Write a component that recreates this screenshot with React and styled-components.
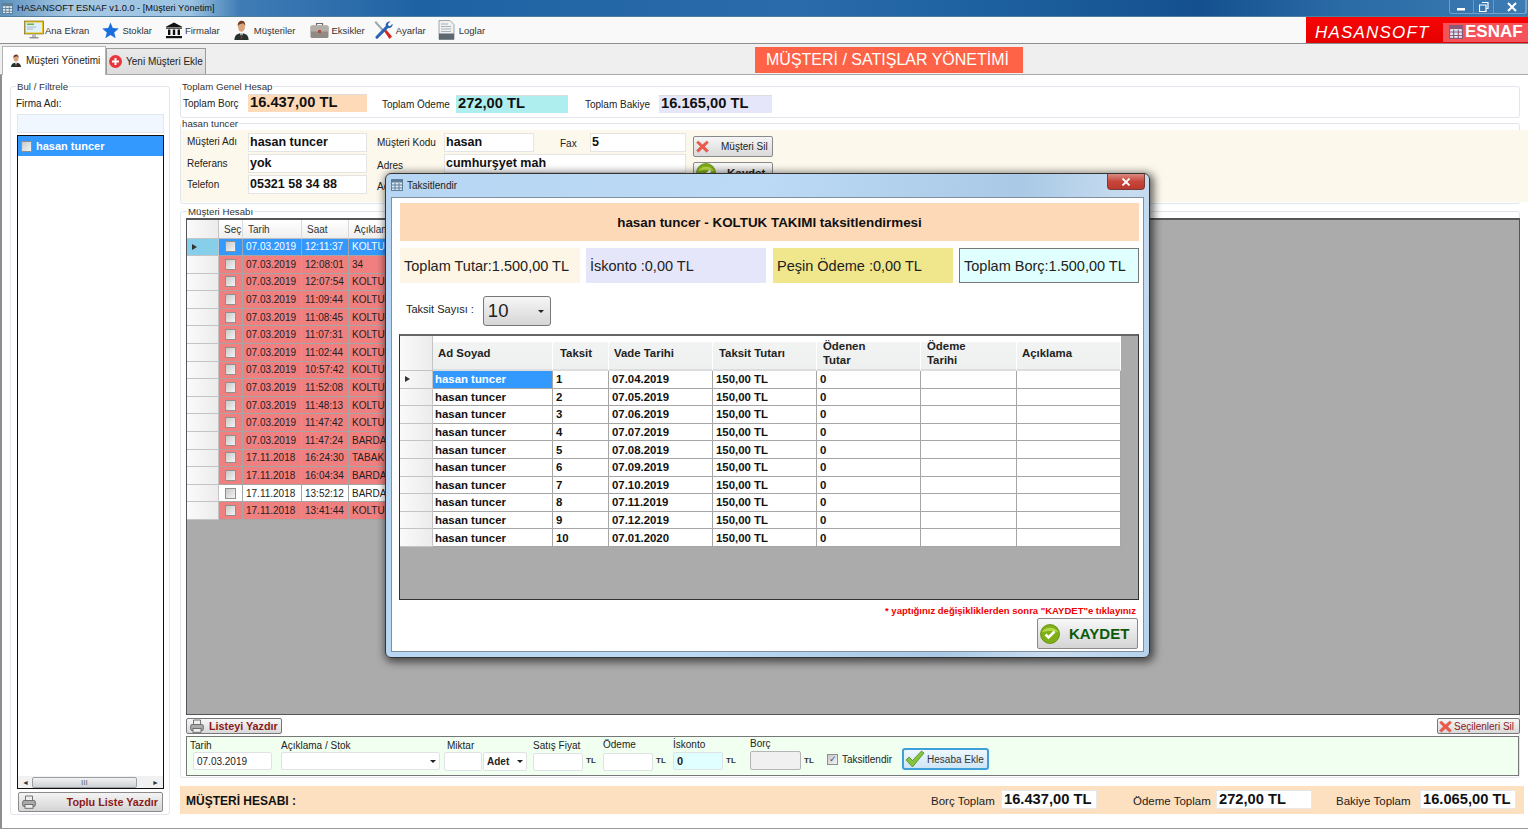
import React from "react";
import styled, { createGlobalStyle } from "styled-components";

const GlobalStyle = createGlobalStyle`
  html, body {
    margin: 0;
    padding: 0;
    overflow: hidden;
    background: #fff;
  }
  * {
    box-sizing: border-box;
  }
  body {
    font-family: "Liberation Sans", Arial, sans-serif;
    font-size: 10px;
    color: #222;
  }
`;

const accountRows = [
  ["07.03.2019", "12:11:37", "KOLTUK", "selected"],
  ["07.03.2019", "12:08:01", "34", "red"],
  ["07.03.2019", "12:07:54", "KOLTUK", "red"],
  ["07.03.2019", "11:09:44", "KOLTUK", "red"],
  ["07.03.2019", "11:08:45", "KOLTUK", "red"],
  ["07.03.2019", "11:07:31", "KOLTUK", "red"],
  ["07.03.2019", "11:02:44", "KOLTUK", "red"],
  ["07.03.2019", "10:57:42", "KOLTUK", "red"],
  ["07.03.2019", "11:52:08", "KOLTUK", "red"],
  ["07.03.2019", "11:48:13", "KOLTUK", "red"],
  ["07.03.2019", "11:47:42", "KOLTUK", "red"],
  ["07.03.2019", "11:47:24", "BARDAK", "red"],
  ["17.11.2018", "16:24:30", "TABAK", "red"],
  ["17.11.2018", "16:04:34", "BARDAK", "red"],
  ["17.11.2018", "13:52:12", "BARDAK", "white"],
  ["17.11.2018", "13:41:44", "KOLTUK", "red"],
];

const installments = [
  ["1", "07.04.2019"],
  ["2", "07.05.2019"],
  ["3", "07.06.2019"],
  ["4", "07.07.2019"],
  ["5", "07.08.2019"],
  ["6", "07.09.2019"],
  ["7", "07.10.2019"],
  ["8", "07.11.2019"],
  ["9", "07.12.2019"],
  ["10", "07.01.2020"],
];

const CalcIcon = ({ size = 12, color = "#5d7f99" }) => (
  <svg width={size} height={size} viewBox="0 0 12 12">
    <rect x="0.5" y="0.5" width="11" height="11" fill="#dfe9f1" stroke={color} />
    <rect x="0.5" y="0.5" width="11" height="3" fill={color} />
    <path d="M4 4v7.5M8 4v7.5M1 6h10M1 9h10" stroke={color} strokeWidth="1" />
  </svg>
);

const MonitorIcon = () => (
  <svg width="20" height="20" viewBox="0 0 20 20">
    <rect x="0.5" y="1" width="19" height="13" fill="#e7c21b" stroke="#6b5a10" strokeWidth="0.6" />
    <rect x="2" y="2.5" width="16" height="10" fill="#dff0f6" />
    <rect x="3" y="3.5" width="7" height="1.5" fill="#67b04a" />
    <path d="M3 7h9M3 9h6" stroke="#9ab" strokeWidth="0.8" />
    <rect x="8" y="14" width="4" height="3" fill="#b9b9b9" />
    <rect x="5.5" y="17" width="9" height="1.4" fill="#8e8e8e" />
  </svg>
);

const StarIcon = () => (
  <svg width="17" height="17" viewBox="0 0 17 17">
    <path d="M8.5 0.5l2.3 5.6 6 .4-4.6 3.9 1.5 5.9-5.2-3.2-5.2 3.2 1.5-5.9L.2 6.5l6-.4z" fill="#1a6fe0" />
  </svg>
);

const BankIcon = () => (
  <svg width="18" height="17" viewBox="0 0 18 17">
    <path d="M9 0.5L17.5 5H.5z" fill="#111" />
    <rect x="1" y="5.5" width="16" height="1.2" fill="#111" />
    <path d="M3 7.5h2.4v5.6H3zM7.8 7.5h2.4v5.6H7.8zM12.6 7.5H15v5.6h-2.4z" fill="#111" />
    <rect x="1" y="14" width="16" height="2.2" fill="#111" />
  </svg>
);

const PersonIcon = ({ w = 17, h = 20 }) => (
  <svg width={w} height={h} viewBox="0 0 18 18" preserveAspectRatio="none">
    <path d="M1.5 18c0-4.2 3-6 7.5-6s7.5 1.800 7.500 6z" fill="#26322d" />
    <path d="M7.300 12l1.700 3.500 1.700-3.500z" fill="#e8e8e8" />
    <path d="M8.500 13h1l.4 3.500-.9 1-.9-1z" fill="#8b2d22" />
    <ellipse cx="9" cy="6" rx="3.700" ry="4.600" fill="#d9a57f" />
    <path d="M5 5.500C4.800 1.900 7 .6 9.200.6c2.400 0 4 1.600 3.800 4.900-.8-1.500-1.500-2.200-2.600-2.500-1.500.6-3.800.6-5.400 2.500z" fill="#6e3c20" />
  </svg>
);

const CaseIcon = () => (
  <svg width="19" height="17" viewBox="0 0 19 17">
    <path d="M6.500 3.500V1.500h6v2" fill="none" stroke="#6f6a64" strokeWidth="1.200" />
    <rect x="0.500" y="3.500" width="18" height="12.500" rx="1.500" fill="#8f8a84" />
    <rect x="0.500" y="3.500" width="18" height="6" rx="1.500" fill="#b3aea8" />
    <rect x="8" y="8" width="3" height="3" fill="#a4523e" />
  </svg>
);

const ToolsIcon = () => (
  <svg width="20" height="20" viewBox="0 0 20 20">
    <path d="M3 1l9 10-1.500 1.500L1.500 2.500z" fill="#9ca7b1" />
    <path d="M11 11l2-1.500 6 7-2.500 2.500z" fill="#d6261c" />
    <path d="M17.500 1.500l-2.600 2.600.6 1.600 1.600.5 2.400-2.400c.5 2.600-1.800 5-4.400 4.200L4.800 18.500c-1 1-3.200-1-2.200-2.100L12.800 6.100c-.9-2.700 1.900-5.200 4.700-4.600z" fill="#2a62b8" />
  </svg>
);

const LogIcon = () => (
  <svg width="17" height="20" viewBox="0 0 17 20">
    <path d="M1 .5h11l4 4v15H1z" fill="#eef0f2" stroke="#8d949b" strokeWidth="0.8" />
    <path d="M3 4h7M3 6.500h10M3 9h10M3 11.500h10" stroke="#aab2ba" strokeWidth="1" />
    <rect x="1" y="13.500" width="15" height="6" fill="#5d6770" />
  </svg>
);

const PlusIcon = () => (
  <svg width="13" height="13" viewBox="0 0 13 13">
    <circle cx="6.500" cy="6.500" r="6.500" fill="#e8373c" />
    <path d="M6.500 3v7M3 6.500h7" stroke="#fff" strokeWidth="2" />
  </svg>
);

const CrossIcon = ({ size = 13 }) => (
  <svg width={size} height={size} viewBox="0 0 13 13">
    <path d="M2.200 1L6.500 4.700 10.800 1l1.700 1.700L8.600 6.500l3.900 4L10.600 12.300 6.500 8.500 2.400 12.300.5 10.500l3.900-4L.5 2.700z" fill="#ee5a4c" stroke="#c9463a" strokeWidth="0.4" />
  </svg>
);

const OkIcon = ({ size = 20 }) => (
  <svg width={size} height={size} viewBox="0 0 20 20">
    <circle cx="10" cy="10" r="9.500" fill="#7fae16" stroke="#5d8a0c" strokeWidth="0.800" />
    <path d="M2 8.500A8.500 7 0 0 1 18 8.500c-4-2-12-2-16 0z" fill="#b5d84a" />
    <path d="M5.500 10.500l3 3 6-6" fill="none" stroke="#fff" strokeWidth="2.600" />
  </svg>
);

const BigCheckIcon = () => (
  <svg width="20" height="18" viewBox="0 0 20 18">
    <path d="M1 10l3-3 3.500 3.500L16.500 1 19 3 7.500 17z" fill="#86c440" stroke="#4f8a1d" strokeWidth="0.800" />
  </svg>
);

const PrinterIcon = () => (
  <svg width="14" height="14" viewBox="0 0 14 14">
    <path d="M3.500 6V1h7v5" fill="#eee" stroke="#666" strokeWidth="0.900" />
    <rect x="0.700" y="5.500" width="12.600" height="6" rx="1.500" fill="#aaa" stroke="#666" strokeWidth="0.900" />
    <rect x="3" y="9.500" width="8" height="3.800" fill="#eee" stroke="#666" strokeWidth="0.900" />
  </svg>
);

const Page = styled.div`
  position: relative;
  width: 1528px;
  height: 829px;
  overflow: hidden;
  background: #fff;
`;

const TitleBar = styled.div`
  height: 17px;
  display: flex;
  align-items: center;
  gap: 4px;
  padding-left: 2px;
  background: linear-gradient(
    90deg,
    #5d90bd 0,
    #a5c8e4 70px,
    #9cc3e2 190px,
    #3f7cb6 240px,
    #1f62a3 420px,
    #2a6cab 800px,
    #1d609f 1000px,
    #14508f 1200px,
    #2a6aa5 1340px,
    #3d7cb3 1528px
  );
  border-bottom: 1px solid #4f7f9f;
`;

const TitleText = styled.span`
  flex: 1;
  font-size: 9.25px;
  color: #111;
`;

const WindowButtons = styled.div`
  display: flex;
  align-self: flex-start;
  height: 14px;
  margin-right: 1px;
  border: 1px solid rgba(255, 255, 255, 0.3);
  border-top: 0;
  border-radius: 0 0 3px 3px;
`;

const WindowButton = styled.div`
  width: ${(p) => p.$w}px;
  padding-left: ${(p) => p.$pl || 0}px;
  display: flex;
  align-items: center;
  justify-content: center;
  border-right: 1px solid rgba(255, 255, 255, 0.25);
`;

const MenuBar = styled.div`
  height: 27px;
  display: flex;
  align-items: center;
  padding-left: 24px;
  background: #f9f9f9;
  border-bottom: 1px solid #8e8e8e;
`;

const MenuItem = styled.div`
  display: flex;
  align-items: center;
  gap: ${(p) => p.$gap ?? 3}px;
  margin-right: ${(p) => p.$mr}px;
  font-size: 9.5px;
  color: #333;
`;

const Logo = styled.div`
  margin-left: auto;
  width: 222px;
  height: 26px;
  display: flex;
  align-items: center;
  background: linear-gradient(#f90505, #e40000);
  color: #fff;
`;

const LogoName = styled.span`
  width: 112px;
  margin: 5px 0 0 9px;
  font-size: 17px;
  font-style: italic;
  letter-spacing: 1.2px;
`;

const LogoBadge = styled.div`
  margin: 4px 0 0 16px;
  height: 19px;
  flex: 1;
  display: flex;
  align-items: center;
  gap: 2px;
  padding-left: 6px;
  background: #f4535a;
  font-size: 17px;
  font-weight: 700;
`;

const TabStrip = styled.div`
  height: 31px;
  display: flex;
  align-items: flex-end;
  padding-left: 2px;
  background: #efefef;
  border-bottom: 1px solid #a9a9a9;
`;

const ActiveTab = styled.div`
  width: 104px;
  height: 29px;
  margin-bottom: -1px;
  display: flex;
  align-items: center;
  gap: 4px;
  padding: 0 0 2px 7px;
  background: #fff;
  border: 1px solid #b5b5b5;
  border-bottom: 0;
  font-size: 10px;
`;

const Tab = styled.div`
  width: 100px;
  height: 26px;
  display: flex;
  align-items: center;
  gap: 4px;
  padding-left: 2px;
  background: linear-gradient(#eaeaea, #dcdcdc);
  border: 1px solid #9a9a9a;
  border-bottom: 0;
  font-size: 10px;
`;

const Banner = styled.div`
  align-self: flex-start;
  margin: 3px 0 0 549px;
  width: 268px;
  height: 26px;
  display: flex;
  align-items: center;
  justify-content: center;
  padding-right: 3px;
  background: #ff6347;
  color: #fff;
  font-size: 16px;
`;

const Body = styled.div`
  display: flex;
  padding: 11px 0 0 10px;
  height: 754px;
  border-left: 2px solid #8e8e8e;
  border-bottom: 1px solid #9a9a9a;
`;

const Sidebar = styled.div`
  width: 160px;
  height: 729px;
  margin-left: -2px;
  display: flex;
  flex-direction: column;
  padding: 0 5px;
  border: 1px solid #e1e6ec;
  border-radius: 3px;
`;

const Legend = styled.div`
  width: fit-content;
  height: 12px;
  line-height: 12px;
  margin: -6px 0 0 ${(p) => p.$ml || 0}px;
  padding: 0 1px;
  background: #fff;
  font-size: 9.7px;
  color: #333;
`;

const FilterLabel = styled.div`
  height: 12px;
  margin-top: 5px;
  font-size: 10px;
  line-height: 12px;
`;

const FilterInput = styled.div`
  height: 19px;
  margin: 4px 0 2px 1px;
  background: #f0f7ff;
  border: 1px solid #e3e6ea;
`;

const FirmList = styled.div`
  flex: none;
  height: 654px;
  margin-left: 1px;
  display: flex;
  flex-direction: column;
  border: 1px solid #111;
`;

const FirmRow = styled.div`
  height: 20px;
  display: flex;
  align-items: center;
  gap: 4px;
  padding-left: 3px;
  background: #3399ff;
  color: #fff;
  font-size: 11px;
  font-weight: 700;
`;

const CheckBox = styled.span`
  width: 11px;
  height: 11px;
  flex: none;
  display: inline-flex;
  align-items: center;
  justify-content: center;
  background: linear-gradient(135deg, #c8c8c8, #f4f4f4);
  border: 1px solid #8f8f8f;
  color: #33529a;
  font-size: 9px;
  line-height: 1;
`;

const HScroll = styled.div`
  margin-top: auto;
  height: 12px;
  display: flex;
  align-items: center;
  gap: 3px;
  padding: 0 4px;
  background: #f1f1f1;
  color: #333;
  font-size: 7px;
`;

const HEnd = styled.span`
  margin-left: auto;
`;

const HThumb = styled.div`
  width: 105px;
  height: 11px;
  display: flex;
  align-items: center;
  justify-content: center;
  background: linear-gradient(#f2f2f2, #cfd3d6);
  border: 1px solid #9aa0a4;
  border-radius: 2px;
  color: #666;
  font-size: 8px;
`;

const PrintAllButton = styled.button`
  height: 20px;
  margin: 3px 0 0 2px;
  width: 145px;
  padding: 0 4px 0 3px;
  display: flex;
  align-items: center;
  justify-content: space-between;
  background: linear-gradient(#f4f4f4, #d4d4d4);
  border: 1px solid #8a8a8a;
  border-radius: 2px;
  color: #8b1a1a;
  font: 700 10.8px "Liberation Sans", Arial, sans-serif;
`;

const Main = styled.div`
  width: 1340px;
  margin-left: 10px;
  display: flex;
  flex-direction: column;
`;

const Group = styled.div`
  height: ${(p) => p.$h}px;
  margin-bottom: ${(p) => p.$mb || 0}px;
  border: 1px solid #e1e6ec;
  border-radius: 3px;
`;

const SummaryRow = styled.div`
  display: flex;
  align-items: flex-start;
  padding-left: 2px;
`;

const SummaryLabel = styled.span`
  width: ${(p) => p.$w}px;
  margin: ${(p) => p.$top}px 0 0 ${(p) => p.$ml || 0}px;
  font-size: 10px;
`;

const SummaryValue = styled.div`
  width: ${(p) => p.$w}px;
  height: 18px;
  margin-top: ${(p) => p.$top}px;
  padding-left: 2px;
  background: ${(p) => p.$bg};
  border-top: 1px solid #ddd;
  font-size: 14.7px;
  font-weight: 700;
  line-height: 15px;
  color: #111;
`;

const CustomerForm = styled.div`
  height: 72px;
  margin-right: -9px;
  display: grid;
  grid-template-columns: 67px 119px 77px 90px 56px 96px 7px 80px;
  grid-template-rows: 21px 21px 21px;
  padding-top: 3px;
  background: #fdf8ec;
`;

const FormLabel = styled.label`
  padding: ${(p) => p.$pt ?? 4}px 0 0 ${(p) => p.$pl || 0}px;
  font-size: 10px;
  grid-column: ${(p) => p.$col || "auto"};
  grid-row: ${(p) => p.$row || "auto"};
`;

const FormInput = styled.div`
  height: 19px;
  padding-left: 1px;
  background: #fff;
  border: 1px solid #e4e4e4;
  font-size: 12.5px;
  font-weight: 700;
  line-height: 16px;
  color: #111;
  grid-column: ${(p) => p.$col || "auto"};
  grid-row: ${(p) => p.$row || "auto"};
`;

const FormButton = styled.button`
  width: 80px;
  height: ${(p) => p.$h || 21}px;
  margin-top: ${(p) => p.$mt}px;
  padding: 0 0 0 2px;
  display: flex;
  align-items: center;
  gap: ${(p) => p.$gap}px;
  white-space: nowrap;
  background: linear-gradient(#f6f6f6, #d9d9d9);
  border: 1px solid #8a8a8a;
  border-radius: 2px;
  font: ${(p) => (p.$bold ? "700 11.5px" : "400 10px")} "Liberation Sans", Arial, sans-serif;
  color: #222;
  grid-column: 8;
  grid-row: ${(p) => p.$row};
`;

const DataPanel = styled.div`
  height: 497px;
  margin: 0 0 0 5px;
  width: 1334px;
  background: #ababab;
  border: 1px solid #555;
  border-top-width: 2px;
`;

const GridRow = styled.div`
  width: ${(p) => p.$w}px;
  display: grid;
  grid-template-columns: ${(p) => p.$cols};
  height: ${(p) => p.$h}px;
`;

const RowHead = styled.div`
  display: flex;
  align-items: center;
  padding-left: 5px;
  background: ${(p) => (p.$active ? "#87ceeb" : "linear-gradient(90deg,#fafafa,#ececec)")};
  border-right: 1px solid #c4c4c4;
  border-bottom: 1px solid #c4c4c4;
`;

const Arrow = styled.span`
  width: 0;
  height: 0;
  border-top: 3.5px solid transparent;
  border-bottom: 3.5px solid transparent;
  border-left: 5px solid #333;
`;

const HeadCell = styled.div`
  padding: 1px 0 0 5px;
  display: flex;
  align-items: center;
  background: linear-gradient(#ffffff, #efefef);
  border-right: 1px solid #dadada;
  border-bottom: 1px solid #bbb;
  font-size: 10px;
  color: #333;
`;

const tones = { selected: "#3399ff", red: "#f08080", white: "#fff" };

const Cell = styled.div`
  padding-left: 3px;
  display: flex;
  align-items: center;
  background: ${(p) => tones[p.$tone]};
  color: ${(p) => (p.$tone === "selected" ? "#fff" : "#222")};
  border-right: 1px solid #a6a6a6;
  border-bottom: 1px solid #a6a6a6;
  font-size: 10px;
  white-space: nowrap;
  overflow: hidden;
`;

const CheckCell = styled(Cell)`
  justify-content: center;
  padding-left: 0;
`;

const ActionRow = styled.div`
  height: 16px;
  margin: 3px 0 2px 5px;
  width: 1334px;
  display: flex;
  justify-content: space-between;
`;

const SmallButton = styled.button`
  width: ${(p) => p.$w}px;
  height: 16px;
  padding: 0 0 0 ${(p) => p.$pl}px;
  display: flex;
  align-items: center;
  gap: ${(p) => p.$gap}px;
  white-space: nowrap;
  background: linear-gradient(#f6f6f6, #d9d9d9);
  border: 1px solid #777;
  border-radius: 2px;
  color: #8b1a1a;
  font: ${(p) => (p.$bold ? "700 10.800px" : "400 10px")} "Liberation Sans", Arial, sans-serif;
`;

const EntryPanel = styled.div`
  height: 40px;
  width: 1333px;
  margin-left: 5px;
  display: flex;
  align-items: flex-start;
  padding-left: 3px;
  background: #f0fff0;
  border: 1px solid #777;
`;

const Field = styled.div`
  width: ${(p) => p.$w}px;
  margin-left: ${(p) => p.$ml || 0}px;
  display: flex;
  flex-direction: column;
  font-size: 10px;
`;

const FieldLabel = styled.span`
  height: 12px;
  line-height: 12px;
  margin: ${(p) => p.$mt}px 0 0 ${(p) => p.$ml || 0}px;
  white-space: nowrap;
`;

const FieldInput = styled.div`
  width: 100%;
  height: ${(p) => p.$h || 18}px;
  margin-top: ${(p) => p.$mt ?? 2}px;
  display: flex;
  align-items: center;
  justify-content: space-between;
  padding: 0 3px;
  background: ${(p) => p.$bg || "#fff"};
  border: 1px solid ${(p) => p.$line || "#dfe3e6"};
  border-radius: 2px;
  font-size: ${(p) => p.$fs || 10}px;
  font-weight: ${(p) => (p.$bold ? 700 : 400)};
  color: #222;
`;

const Caret = styled.span`
  width: 0;
  height: 0;
  border-left: 3px solid transparent;
  border-right: 3px solid transparent;
  border-top: 3px solid #222;
`;

const Unit = styled.span`
  width: ${(p) => p.$w}px;
  margin-top: 19px;
  padding-left: 3px;
  font-size: 8px;
  font-weight: 700;
  color: #333;
`;

const TaxCheck = styled.div`
  margin: 17px 0 0 ${(p) => p.$ml}px;
  display: flex;
  align-items: center;
  gap: 4px;
  font-size: 10px;
`;

const AddButton = styled.button`
  width: 87px;
  height: 22px;
  margin: 11px 0 0 10px;
  padding: 0 0 0 1px;
  display: flex;
  align-items: center;
  gap: 2px;
  white-space: nowrap;
  background: linear-gradient(#eef7fd, #cfe6f6);
  border: 2px solid #3f9fd8;
  border-radius: 3px;
  color: #333;
  font: 10px "Liberation Sans", Arial, sans-serif;
`;

const Footer = styled.div`
  height: 28px;
  margin: 8px -4px 0 0;
  display: flex;
  align-items: center;
  padding-left: 6px;
  background: #fde0bf;
`;

const FooterTitle = styled.strong`
  flex: 1;
  padding-top: 1px;
  font-size: 12px;
  color: #111;
`;

const FooterLabel = styled.span`
  width: ${(p) => p.$w}px;
  padding: 2px 0 0 ${(p) => p.$pl || 0}px;
  font-size: 11.5px;
  color: #222;
`;

const FooterValue = styled.div`
  width: 96px;
  height: 19px;
  margin: 0 ${(p) => p.$mr}px 1px 0;
  padding-left: 2px;
  background: #fff;
  border: 1px solid #e8e8e8;
  font-size: 14.7px;
  font-weight: 700;
  line-height: 17px;
  color: #111;
`;

const Modal = styled.div`
  position: absolute;
  left: 385px;
  top: 173px;
  width: 765px;
  height: 485px;
  display: flex;
  flex-direction: column;
  padding: 0 5px 5px;
  background: linear-gradient(100deg, #b7d6f3 0, #bcdaf5 45%, #a9c9e6 75%, #c8dcf0 88%, #b5d2ec 100%);
  border: 1px solid #333;
  border-radius: 6px;
  box-shadow: 2px 2px 8px 2px rgba(0, 0, 0, 0.6);
`;

const ModalTitle = styled.div`
  height: 23px;
  flex: none;
  display: flex;
  align-items: flex-start;
  justify-content: space-between;
  font-size: 10px;
  color: #222;
`;

const ModalCaption = styled.div`
  display: flex;
  align-items: center;
  gap: 4px;
  padding: 5px 0 0 0;
`;

const CloseButton = styled.div`
  width: 38px;
  height: 16px;
  margin-right: -1px;
  display: flex;
  align-items: center;
  justify-content: center;
  background: linear-gradient(#d98a80 0, #c8453a 50%, #b93a30 100%);
  border: 1px solid #7a3a35;
  border-top: 0;
  border-radius: 0 0 4px 4px;
`;

const ModalBody = styled.div`
  flex: 1;
  display: flex;
  flex-direction: column;
  padding: 5px 4px 0 8px;
  background: #fff;
  border: 1px solid #7f8f9f;
`;

const ModalHeader = styled.div`
  height: 38px;
  flex: none;
  display: flex;
  align-items: center;
  justify-content: center;
  background: #fed9b7;
  font-size: 13.4px;
  font-weight: 700;
  color: #111;
`;

const TotalRow = styled.div`
  display: flex;
  gap: 6px;
  margin-top: 7px;
`;

const TotalBox = styled.div`
  flex: none;
  width: 180px;
  height: 35px;
  margin-left: ${(p) => p.$ml || 0}px;
  display: flex;
  align-items: center;
  padding-left: 4px;
  background: ${(p) => p.$bg};
  border: ${(p) => (p.$line ? "1px solid #777" : "0")};
  font-size: 14.500px;
  color: #222;
`;

const InstallmentRow = styled.div`
  display: flex;
  align-items: center;
  gap: 9px;
  margin: 13px 0 8px 6px;
`;

const InstallmentLabel = styled.span`
  padding-bottom: 4px;
  font-size: 11px;
`;

const Combo = styled.div`
  width: 68px;
  height: 30px;
  display: flex;
  align-items: center;
  justify-content: space-between;
  padding: 0 6px 0 4px;
  background: linear-gradient(#f6f6f6, #d6d6d6);
  border: 1px solid #777;
  border-radius: 3px;
  font-size: 18.500px;
  color: #222;
`;

const PlanPanel = styled.div`
  width: 740px;
  height: 266px;
  margin-left: -1px;
  flex: none;
  background: #ababab;
  border: 1px solid #333;
  border-top: 2px solid #666;
`;

const PlanHead = styled(HeadCell)`
  padding: 0 0 0 ${(p) => p.$pl ?? 6}px;
  align-items: center;
  background: linear-gradient(#fff 0, #fff 18%, #f2f3f3 20%, #eef0f0 100%);
  border-right: 1px solid #fff;
  border-bottom: 2px solid #ddd;
  font-size: 11.400px;
  font-weight: 700;
  line-height: 14px;
  color: #222;
`;

const PlanCell = styled(Cell)`
  padding-left: ${(p) => p.$pl ?? 3}px;
  font-size: 11.400px;
  font-weight: 700;
  color: ${(p) => (p.$tone === "selected" ? "#fff" : "#111")};
`;

const Notice = styled.div`
  margin-top: 5px;
  height: 12px;
  padding-right: 3px;
  text-align: right;
  font-size: 9.500px;
  font-weight: 700;
  line-height: 12px;
  color: #f00000;
`;

const SaveRow = styled.div`
  display: flex;
  justify-content: flex-end;
  margin-top: 1px;
  padding-right: 1px;
`;

const SaveButton = styled.button`
  width: 101px;
  height: 31px;
  padding: 0 0 0 2px;
  display: flex;
  align-items: center;
  gap: 9px;
  background: linear-gradient(#f8f8f8, #d4d4d4);
  border: 1px solid #8a8a8a;
  border-radius: 2px;
  color: #0b5a0b;
  font: 700 15px "Liberation Sans", Arial, sans-serif;
`;

const accountCols = "32px 24px 59px 47px 100px";
const planCols = "33px 120px 56px 104px 104px 104px 96px 104px";

export default function App() {
  return (
    <Page>
      <GlobalStyle />
      <TitleBar>
        <CalcIcon size={11} />
        <TitleText>HASANSOFT ESNAF v1.0.0 - [Müşteri Yönetim]</TitleText>
        <WindowButtons>
          <WindowButton $w={24}>
            <svg width="9" height="9" viewBox="0 0 9 9">
              <rect x="0" y="6" width="8" height="2.500" fill="#fff" />
            </svg>
          </WindowButton>
          <WindowButton $w={20}>
            <svg width="10" height="10" viewBox="0 0 10 10">
              <path d="M3 .5h6v6H7.500M.5 3h6.500v6.500H.5z" fill="none" stroke="#fff" strokeWidth="1.200" />
            </svg>
          </WindowButton>
          <WindowButton $w={32} $pl={5}>
            <svg width="10" height="10" viewBox="0 0 10 10">
              <path d="M1 1l8 8M9 1l-8 8" stroke="#fff" strokeWidth="2" />
            </svg>
          </WindowButton>
        </WindowButtons>
      </TitleBar>

      <MenuBar>
        <MenuItem $mr={13} $gap={1}><MonitorIcon />Ana Ekran</MenuItem>
        <MenuItem $mr={13}><StarIcon />Stoklar</MenuItem>
        <MenuItem $mr={13} $gap={2}><BankIcon />Firmalar</MenuItem>
        <MenuItem $mr={14} $gap={4}><PersonIcon />Müşteriler</MenuItem>
        <MenuItem $mr={8}><CaseIcon />Eksikler</MenuItem>
        <MenuItem $mr={12}><ToolsIcon />Ayarlar</MenuItem>
        <MenuItem $mr={0} $gap={4}><LogIcon />Loglar</MenuItem>
        <Logo>
          <LogoName>HASANSOFT</LogoName>
          <LogoBadge>
            <CalcIcon size={14} color="#8c5a78" />
            ESNAF
          </LogoBadge>
        </Logo>
      </MenuBar>

      <TabStrip>
        <ActiveTab><PersonIcon w={12} h={13} />Müşteri Yönetimi</ActiveTab>
        <Tab><PlusIcon />Yeni Müşteri Ekle</Tab>
        <Banner>MÜŞTERİ / SATIŞLAR YÖNETİMİ</Banner>
      </TabStrip>

      <Body>
        <Sidebar>
          <Legend>Bul / Filtrele</Legend>
          <FilterLabel>Firma Adı:</FilterLabel>
          <FilterInput />
          <FirmList>
            <FirmRow><CheckBox />hasan tuncer</FirmRow>
            <HScroll>
              <span>◄</span>
              <HThumb>III</HThumb>
              <HEnd>►</HEnd>
            </HScroll>
          </FirmList>
          <PrintAllButton>
            <PrinterIcon />
            Toplu Liste Yazdır
          </PrintAllButton>
        </Sidebar>

        <Main>
          <Group $h={32} $mb={5}>
            <Legend>Toplam Genel Hesap</Legend>
            <SummaryRow>
              <SummaryLabel $w={65} $top={5}>Toplam Borç</SummaryLabel>
              <SummaryValue $w={119} $top={1} $bg="#ffdab9">16.437,00 TL</SummaryValue>
              <SummaryLabel $w={74} $ml={15} $top={6}>Toplam Ödeme</SummaryLabel>
              <SummaryValue $w={112} $top={2} $bg="#aeeeee">272,00 TL</SummaryValue>
              <SummaryLabel $w={74} $ml={17} $top={6}>Toplam Bakiye</SummaryLabel>
              <SummaryValue $w={113} $top={2} $bg="#e6e6fa">16.165,00 TL</SummaryValue>
            </SummaryRow>
          </Group>

          <Group $h={81} $mb={7}>
            <Legend>hasan tuncer</Legend>
            <CustomerForm>
              <FormLabel $pl={6} $pt={3}>Müşteri Adı</FormLabel>
              <FormInput>hasan tuncer</FormInput>
              <FormLabel $pl={10} $pt={4}>Müşteri Kodu</FormLabel>
              <FormInput>hasan</FormInput>
              <FormLabel $pl={26} $pt={5}>Fax</FormLabel>
              <FormInput>5</FormInput>
              <FormButton $row={1} $mt={3} $gap={12}><CrossIcon />Müşteri Sil</FormButton>
              <FormLabel $pl={6} $row={2} $col={1}>Referans</FormLabel>
              <FormInput $row={2} $col={2}>yok</FormInput>
              <FormLabel $pl={10} $row={2} $col={3} $pt={6}>Adres</FormLabel>
              <FormInput $row={2} $col="4 / 7">cumhurşyet mah</FormInput>
              <FormButton $row={2} $mt={8} $gap={11} $bold><OkIcon size={20} />Kaydet</FormButton>
              <FormLabel $pl={6} $row={3} $col={1}>Telefon</FormLabel>
              <FormInput $row={3} $col={2}>05321 58 34 88</FormInput>
              <FormLabel $pl={10} $row={3} $col={3} $pt={6}>Açık</FormLabel>
            </CustomerForm>
          </Group>

          <Group $h={567}>
            <Legend $ml={6}>Müşteri Hesabı</Legend>
            <DataPanel>
              <GridRow $w={262} $cols={accountCols} $h={18.5}>
                <RowHead />
                <HeadCell>Seç</HeadCell>
                <HeadCell>Tarih</HeadCell>
                <HeadCell>Saat</HeadCell>
                <HeadCell>Açıklama</HeadCell>
              </GridRow>
              {accountRows.map(([date, time, desc, tone], i) => (
                <GridRow key={i} $w={262} $cols={accountCols} $h={17.6}>
                  <RowHead $active={i === 0}>{i === 0 && <Arrow />}</RowHead>
                  <CheckCell $tone={tone}><CheckBox /></CheckCell>
                  <Cell $tone={tone}>{date}</Cell>
                  <Cell $tone={tone}>{time}</Cell>
                  <Cell $tone={tone}>{desc}</Cell>
                </GridRow>
              ))}
            </DataPanel>
            <ActionRow>
              <SmallButton $w={96} $pl={3} $gap={5} $bold>
                <PrinterIcon />
                Listeyi Yazdır
              </SmallButton>
              <SmallButton $w={83} $pl={1} $gap={2}>
                <CrossIcon />
                Seçilenleri Sil
              </SmallButton>
            </ActionRow>
            <EntryPanel>
              <Field $w={79} $ml={3}>
                <FieldLabel $mt={3} $ml={-3}>Tarih</FieldLabel>
                <FieldInput $mt={0}>07.03.2019</FieldInput>
              </Field>
              <Field $w={159} $ml={9}>
                <FieldLabel $mt={3}>Açıklama / Stok</FieldLabel>
                <FieldInput $mt={0}>
                  <span />
                  <Caret />
                </FieldInput>
              </Field>
              <Field $w={38} $ml={4}>
                <FieldLabel $mt={3} $ml={3}>Miktar</FieldLabel>
                <FieldInput $mt={0} $h={19} />
              </Field>
              <Field $w={44} $ml={1}>
                <FieldLabel $mt={3} />
                <FieldInput $mt={0} $h={19} $bold>
                  Adet
                  <Caret />
                </FieldInput>
              </Field>
              <Field $w={50} $ml={6}>
                <FieldLabel $mt={3}>Satış Fiyat</FieldLabel>
                <FieldInput $mt={1} />
              </Field>
              <Unit $w={20}>TL</Unit>
              <Field $w={50}>
                <FieldLabel $mt={2}>Ödeme</FieldLabel>
                <FieldInput $mt={2} />
              </Field>
              <Unit $w={20}>TL</Unit>
              <Field $w={50}>
                <FieldLabel $mt={2}>İskonto</FieldLabel>
                <FieldInput $mt={1} $bg="#e0ffff" $bold $fs={11}>0</FieldInput>
              </Field>
              <Unit $w={27}>TL</Unit>
              <Field $w={51}>
                <FieldLabel $mt={1}>Borç</FieldLabel>
                <FieldInput $mt={1} $h={19} $bg="#f0f0f0" $line="#b5b5b5" />
              </Field>
              <Unit $w={23}>TL</Unit>
              <TaxCheck $ml={3}>
                <CheckBox>✓</CheckBox>
                Taksitlendir
              </TaxCheck>
              <AddButton>
                <BigCheckIcon />
                Hesaba Ekle
              </AddButton>
            </EntryPanel>
          </Group>

          <Footer>
            <FooterTitle>MÜŞTERİ HESABI :</FooterTitle>
            <FooterLabel $w={71} $pl={1}>Borç Toplam</FooterLabel>
            <FooterValue $mr={36}>16.437,00 TL</FooterValue>
            <FooterLabel $w={83}>Ödeme Toplam</FooterLabel>
            <FooterValue $mr={24}>272,00 TL</FooterValue>
            <FooterLabel $w={84}>Bakiye Toplam</FooterLabel>
            <FooterValue $mr={8}>16.065,00 TL</FooterValue>
          </Footer>
        </Main>
      </Body>

      <Modal>
        <ModalTitle>
          <ModalCaption>
            <CalcIcon size={12} />
            Taksitlendir
          </ModalCaption>
          <CloseButton>
            <svg width="10" height="8" viewBox="0 0 10 8">
              <path d="M1.500 .5l7 7M8.500 .5l-7 7" stroke="#fff" strokeWidth="1.800" />
            </svg>
          </CloseButton>
        </ModalTitle>
        <ModalBody>
          <ModalHeader>hasan tuncer - KOLTUK TAKIMI taksitlendirmesi</ModalHeader>
          <TotalRow>
            <TotalBox $bg="#fdf5e6">Toplam Tutar:1.500,00 TL</TotalBox>
            <TotalBox $bg="#e6e6fa">İskonto :0,00 TL</TotalBox>
            <TotalBox $bg="#f0e68c" $ml={1}>Peşin Ödeme :0,00 TL</TotalBox>
            <TotalBox $bg="#e0ffff" $line>Toplam Borç:1.500,00 TL</TotalBox>
          </TotalRow>
          <InstallmentRow>
            <InstallmentLabel>Taksit Sayısı :</InstallmentLabel>
            <Combo>
              10
              <Caret />
            </Combo>
          </InstallmentRow>
          <PlanPanel>
            <GridRow $w={721} $cols={planCols} $h={35}>
              <RowHead />
              <PlanHead $pl={5}>Ad Soyad</PlanHead>
              <PlanHead $pl={7}>Taksit</PlanHead>
              <PlanHead $pl={5}>Vade Tarihi</PlanHead>
              <PlanHead>Taksit Tutarı</PlanHead>
              <PlanHead>Ödenen<br />Tutar</PlanHead>
              <PlanHead>Ödeme<br />Tarihi</PlanHead>
              <PlanHead $pl={5}>Açıklama</PlanHead>
            </GridRow>
            {installments.map(([no, date], i) => (
              <GridRow key={no} $w={721} $cols={planCols} $h={17.6}>
                <RowHead>{i === 0 && <Arrow />}</RowHead>
                <PlanCell $tone={i === 0 ? "selected" : "white"} $pl={2}>hasan tuncer</PlanCell>
                <PlanCell $tone="white">{no}</PlanCell>
                <PlanCell $tone="white">{date}</PlanCell>
                <PlanCell $tone="white">150,00 TL</PlanCell>
                <PlanCell $tone="white">0</PlanCell>
                <PlanCell $tone="white" />
                <PlanCell $tone="white" />
              </GridRow>
            ))}
          </PlanPanel>
          <Notice>* yaptığınız değişikliklerden sonra "KAYDET"e tıklayınız</Notice>
          <SaveRow>
            <SaveButton>
              <OkIcon />
              KAYDET
            </SaveButton>
          </SaveRow>
        </ModalBody>
      </Modal>
    </Page>
  );
}
